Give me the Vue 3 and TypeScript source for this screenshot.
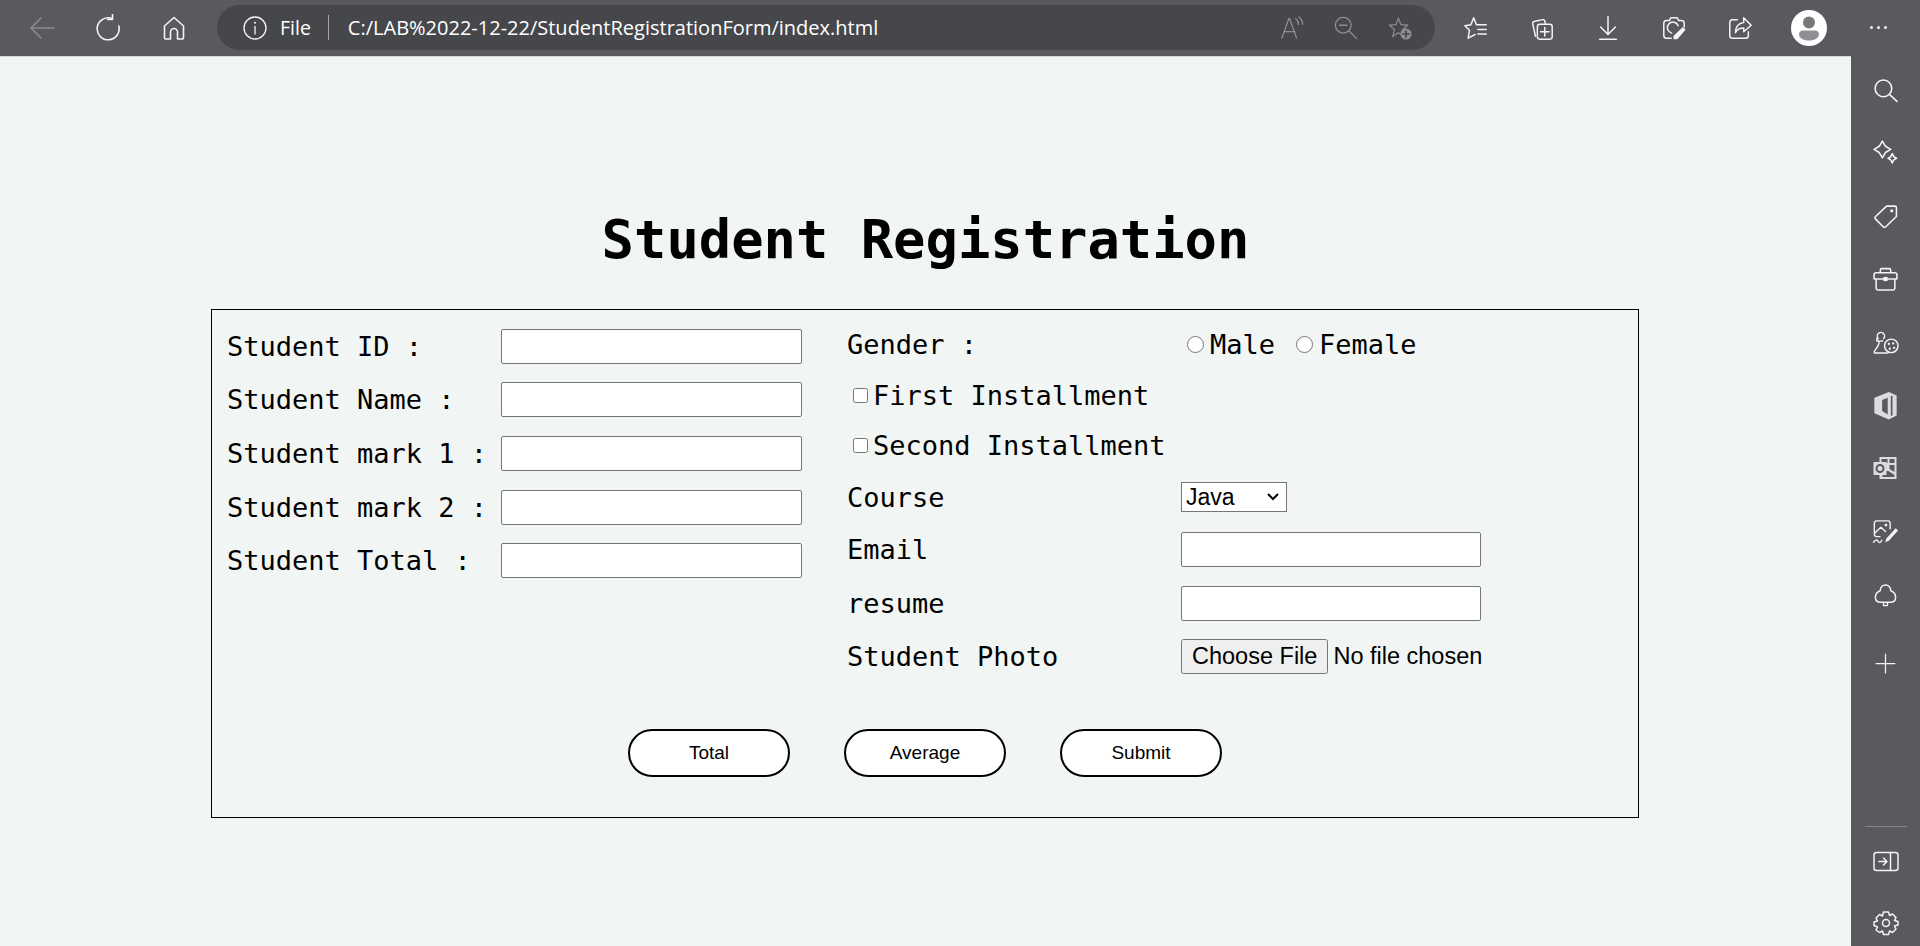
<script setup lang="ts">
import {ref} from "vue";

const leftLabels = ["Student ID :", "Student Name :", "Student mark 1 :", "Student mark 2 :", "Student Total :"];
const course = ref("Java");
</script>

<template>
  <div class="Browser">
    <header class="Toolbar">
      <svg class="Icon nav back" viewBox="0 0 28 28"><path d="M26 14H3M13 4 3 14l10 10"/></svg>
      <svg class="Icon nav" viewBox="0 0 28 28"><path d="M18 4.500A11 11 0 1 0 24.800 12M18.500 0.500V5.500H13.500"/></svg>
      <svg class="Icon nav" viewBox="0 0 28 28"><path d="M14 3.500 4.500 12v11.500a1.500 1.500 0 0 0 1.500 1.500h4.500v-7a3.500 3.500 0 0 1 7 0v7H22a1.500 1.500 0 0 0 1.500-1.500V12z"/></svg>

      <div class="AddressBar">
        <svg class="Icon info" viewBox="0 0 24 24"><circle cx="12" cy="12" r="11"/><path d="M12 10.500V18"/><circle class="Solid" cx="12" cy="6.800" r="1"/></svg>
        <span class="FileLabel">File</span>
        <span class="Separator"></span>
        <span class="Url">C:/LAB%2022-12-22/StudentRegistrationForm/index.html</span>
        <div class="AddressIcons">
          <svg class="Icon dim" viewBox="0 0 26 26"><path d="M2 24 9.500 3h1L18 24M5 17h11M17 3c2 1.500 3 3.500 3 6M20.500 1c2.500 2 4 4.500 4 8"/></svg>
          <svg class="Icon dim" viewBox="0 0 26 26"><circle cx="10" cy="10" r="8.500"/><path d="M16 16l8.500 8.500M6 10h8"/></svg>
          <svg class="Icon dim" viewBox="0 0 28 28"><path d="M12 2.500l3 7.500 8 .6-6 5.400 1.800 7.500L12 19.500 5.500 24l2-8-6-5.400 8-.6z"/><circle class="Badge" cx="21" cy="21" r="6.500"/><path class="BadgePlus" d="M21 17.500v7M17.500 21h7"/></svg>
        </div>
      </div>

      <div class="ToolIcons">
        <svg class="Icon tool" viewBox="0 0 28 28"><path d="M14.500 10.500 11.500 3l-3 7.500-6.500 1 5 5-1.500 8.500 7.500-4M14.500 10.500H25M16 15.500h9M16 20.500h9"/></svg>
        <svg class="Icon tool" viewBox="0 0 28 28"><path d="M7 23 4 9.500a2 2 0 0 1 1.500-2.500l9-2a2 2 0 0 1 2.500 1.500l.6 2.500"/><rect x="9" y="10" width="16" height="16" rx="2.500"/><path d="M17 13.500v9M12.500 18h9"/></svg>
        <svg class="Icon tool" viewBox="0 0 28 28"><path d="M14 2v19M6 13l8 8 8-8M5 26h18"/></svg>
        <svg class="Icon tool" viewBox="0 0 28 28"><path d="M9 6l1.500-3h7L19 6h3a3 3 0 0 1 3 3v4M11 25H6a3 3 0 0 1-3-3V9a3 3 0 0 1 3-3h3"/><path d="M18.500 11.500a6 6 0 1 0-7 8"/><path class="FillWhite" d="M23.500 13l3 3-9 10h-4v-3.500z"/></svg>
        <svg class="Icon tool" viewBox="0 0 28 28"><path d="M11 5H6a3 3 0 0 0-3 3v14a3 3 0 0 0 3 3h14a3 3 0 0 0 3-3v-4"/><path d="M18 3l8 8-8 7v-4c-4 0-7 1-9 5 0-6 3-10 9-11z"/></svg>
        <div class="Avatar">
          <svg viewBox="0 0 36 36"><circle cx="18" cy="12.500" r="6" fill="#77787c"/><path d="M8 24a4 4 0 0 1 4-3.500h12a4 4 0 0 1 4 3.500c0 4-4 6.500-10 6.500S8 28 8 24z" fill="#8f9094"/></svg>
        </div>
        <div class="More"><i></i><i></i><i></i></div>
      </div>
    </header>

    <div class="Body">
      <main class="Page">
        <h1 class="Title">Student Registration</h1>
        <form class="FormBox" @submit.prevent>
          <div class="Columns">
            <div class="LeftColumn">
              <label v-for="label in leftLabels" :key="label" class="LeftRow">
                <span>{{ label }}</span>
                <input class="TextField" type="text"/>
              </label>
            </div>
            <div class="RightColumn">
              <div class="RightRow gender">
                <span>Gender :</span>
                <div class="Choices">
                  <label class="Choice"><input type="radio" name="gender"/>Male</label>
                  <label class="Choice"><input type="radio" name="gender"/>Female</label>
                </div>
              </div>
              <label class="CheckRow first"><input type="checkbox"/>First Installment</label>
              <label class="CheckRow second"><input type="checkbox"/>Second Installment</label>
              <div class="RightRow course">
                <span>Course</span>
                <select v-model="course" class="CourseSelect">
                  <option>Java</option>
                  <option>Python</option>
                </select>
              </div>
              <div class="RightRow">
                <span>Email</span>
                <input class="TextField" type="text"/>
              </div>
              <div class="RightRow">
                <span>resume</span>
                <input class="TextField" type="text"/>
              </div>
              <div class="RightRow">
                <span>Student Photo</span>
                <input class="FileField" type="file"/>
              </div>
            </div>
          </div>
          <div class="Actions">
            <button type="button" class="PillButton">Total</button>
            <button type="button" class="PillButton">Average</button>
            <button type="submit" class="PillButton">Submit</button>
          </div>
        </form>
      </main>

      <aside class="Sidebar">
        <div class="SideTop">
          <svg class="Icon side" viewBox="0 0 24 24"><circle cx="10" cy="10" r="8"/><path d="M16 16l7 6.500"/></svg>
          <svg class="Icon side sparkle" viewBox="0 0 24 24"><path d="M9 2l3 5 5 3-5 3-3 5-3-5-5-3 5-3zM18.500 14l1.500 3 2.500 1.500-2.500 1.500-1.500 3-1.500-3-2.500-1.500 2.500-1.500z"/></svg>
          <svg class="Icon side" viewBox="0 0 24 24"><path d="M2.500 13 13 3h8a1.500 1.500 0 0 1 1.500 1.500V13L12 23a1.500 1.500 0 0 1-2 0l-7.500-7.500a1.800 1.800 0 0 1 0-2.500z"/><circle class="Solid" cx="18" cy="7.500" r="1.500"/></svg>
          <svg class="Icon side wide" viewBox="0 0 26 24"><path d="M8 6V3.500A1.500 1.500 0 0 1 9.500 2h7A1.500 1.500 0 0 1 18 3.500V6M2 8a2 2 0 0 1 2-2h18a2 2 0 0 1 2 2v4H2zM4 12v9a1.500 1.500 0 0 0 1.500 1.500h15A1.500 1.500 0 0 0 22 21v-9"/><rect class="Solid" x="11" y="10" width="4" height="4"/></svg>
          <svg class="Icon side wide" viewBox="0 0 28 26"><path d="M12 9.500a3.800 3.800 0 1 0-5.500 0H5v2.500h2.500c0 3-1 5.500-4 9l-1 1.500v2h14M9 12h2"/><circle cx="20" cy="17" r="7"/><circle class="Solid" cx="17.500" cy="15" r="1.200"/><circle class="Solid" cx="22" cy="14.500" r="1.200"/><circle class="Solid" cx="23" cy="19" r="1.200"/><circle class="Solid" cx="18.500" cy="20" r="1.200"/></svg>
          <svg class="Icon side office" viewBox="0 0 24 26"><path class="FillPale" d="M2 6 15 1l7 3v18l-7 3.500L2 20zM14 6 9 8v10l5 3z"/><path class="NoFillDark" d="M17.500 5v16.500"/></svg>
          <svg class="Icon side wide" viewBox="0 0 26 26"><path class="FillPale" d="M7 2h17v22H7zM9 4v4h6V4zM17 4v4h5V4zM10 16v6h12v-2l-6-4zM17 10v4l5 3v-7z"/><rect class="FillPale" x="1" y="7" width="13" height="13"/><circle class="DarkRing" cx="7.500" cy="13.500" r="3.500"/></svg>
          <svg class="Icon side wide" viewBox="0 0 28 28"><path d="M8 19H4.500A2.500 2.500 0 0 1 2 16.500V4.500A2.500 2.500 0 0 1 4.500 2h12A2.500 2.500 0 0 1 19 4.500v6"/><path d="M2.500 15 9 9l5 4.500"/><circle class="Solid" cx="14.500" cy="6.500" r="1.500"/><path class="FillWhite" d="M25 10l2.500 2.500-10 11-4 1.500 1.500-4z"/><path d="M1 25c3-3 4-3 5-1s2 2 4-1"/></svg>
          <svg class="Icon side tree" viewBox="0 0 24 26"><path d="M12 2c-3 0-5.500 2.500-5.500 6-3 1-5 4-5 7 0 3.500 2.500 5 5.500 5h10c3 0 5.500-1.500 5.500-5 0-3-2-6-5-7 0-3.500-2.500-6-5.500-6zM10 20v3.500h4V20"/></svg>
          <svg class="Icon side plus" viewBox="0 0 24 24"><path d="M12 3v18M3 12h18"/></svg>
        </div>
        <div class="SideBottom">
          <span class="SideDivider"></span>
          <svg class="Icon side panel" viewBox="0 0 26 20"><rect x="1" y="1" width="24" height="18" rx="2.500"/><path d="M17.500 1v18M6 10h8M10.500 6.500 14 10l-3.500 3.500"/></svg>
          <svg class="Icon side gear" viewBox="0 0 26 26"><circle cx="13" cy="13" r="3.500"/><path d="M10.500 2h5l1 3.500 3-1.500 3.500 3.500-1.500 3 3.500 1v3.500l-3.500 1 1.500 3-3.500 3.500-3-1.500-1 3.500h-5l-1-3.500-3 1.500L3 20l1.500-3L1 15.500V12l3.500-1L3 8l3.500-3.500 3 1.500z"/></svg>
        </div>
      </aside>
    </div>
  </div>
</template>

<style>
html, body {
  margin: 0;
  height: 100%;
  overflow: hidden;
}
</style>

<style scoped>
.Browser {
  width: 1920px;
  height: 946px;
  display: flex;
  flex-direction: column;
  background: #595a5f;
  color: #000;
}

.Icon {
  fill: none;
  stroke: #f4f4f5;
  stroke-width: 1.6;
  stroke-linecap: round;
  stroke-linejoin: round;
  flex: none;
}

.Solid {
  fill: #f4f4f5;
  stroke: none;
}

.FillWhite {
  fill: #f4f4f5;
  stroke: none;
}

.FillPale {
  fill: #dcdcde;
  stroke: none;
  fill-rule: evenodd;
}

.NoFillDark {
  stroke: #595a5f;
}

.DarkRing {
  fill: #dcdcde;
  stroke: #595a5f;
  stroke-width: 2;
}

/* region: toolbar */
.Toolbar {
  height: 56px;
  flex: none;
  display: flex;
  align-items: center;
  box-sizing: border-box;
  padding-left: 28px;
  padding-bottom: 1px;
  background: #595a5f;
  font-family: "Open Sans", "Noto Sans", sans-serif;
  color: #fff;
}

.nav {
  width: 28px;
  height: 28px;
  margin-right: 38px;
}

.back {
  stroke: #8b8c90;
}

.AddressBar {
  width: 1218px;
  height: 45px;
  margin-left: -9px;
  border-radius: 23px;
  background: #46474b;
  display: flex;
  align-items: center;
  box-sizing: border-box;
  padding-left: 26px;
  flex: none;
}

.info {
  width: 24px;
  height: 24px;
  stroke-width: 1.3;
}

.FileLabel {
  margin-left: 13px;
  font-size: 19.500px;
}

.Separator {
  width: 1px;
  height: 25px;
  margin: 0 19px 0 17px;
  background: #a5a6a9;
}

.Url {
  font-size: 20px;
  white-space: nowrap;
}

.AddressIcons {
  margin-left: auto;
  margin-right: 23px;
  display: flex;
  align-items: center;
  gap: 30px;
}

.dim {
  width: 24px;
  height: 24px;
  stroke: #8e8f93;
  stroke-width: 1.4;
}

.Badge {
  fill: #8e8f93;
  stroke: none;
}

.BadgePlus {
  stroke: #46474b;
  stroke-width: 2;
}

.ToolIcons {
  flex: 1;
  display: flex;
  align-items: center;
  padding-left: 28px;
}

.tool {
  width: 26px;
  height: 26px;
  margin-right: 40px;
}

.Avatar {
  width: 36px;
  height: 36px;
  border-radius: 50%;
  background: #fff;
  margin-left: -2px;
  overflow: hidden;
}

.Avatar svg {
  display: block;
}

.More {
  margin-left: 43px;
  display: flex;
  gap: 4px;
}

.More i {
  width: 3px;
  height: 3px;
  border-radius: 50%;
  background: #f4f4f5;
}
/* endregion */

.Body {
  flex: 1;
  min-height: 0;
  display: flex;
}

/* region: page */
.Page {
  width: 1851px;
  box-sizing: border-box;
  border-top: 1px solid #d5d8d7;
  background: #f1f5f4;
  padding: 151px 0 0 211px;
  font-family: "DejaVu Sans Mono", "Liberation Mono", monospace;
  font-size: 27px;
}

.Title {
  width: 1429px;
  margin: 0 0 37px;
  text-align: center;
  font-size: 53.800px;
  line-height: 64px;
  font-weight: 700;
}

.FormBox {
  width: 1428px;
  height: 509px;
  box-sizing: border-box;
  border: 1px solid #000;
  padding: 0 0 0 15px;
}

.Columns {
  display: flex;
  height: 405px;
}

.LeftColumn {
  width: 620px;
  flex: none;
  padding-top: 9.500px;
  box-sizing: border-box;
}

.LeftRow {
  display: grid;
  grid-template-columns: 274px 1fr;
  align-items: center;
  height: 53.600px;
  white-space: pre;
}

.TextField {
  box-sizing: border-box;
  width: 301px;
  height: 35px;
  padding: 1px 2px;
  border: 1px solid #767676;
  border-radius: 2px;
  background: #fff;
}

.RightColumn {
  flex: 1;
  padding-top: 8px;
}

.RightColumn .TextField {
  width: 300px;
}

.RightRow {
  display: grid;
  grid-template-columns: 334px 1fr;
  align-items: center;
  height: 53.600px;
  white-space: pre;
}

.RightRow.gender {
  height: 52px;
}

.RightRow.course {
  height: 52px;
}

.Choices {
  display: flex;
  margin-left: 5px;
  gap: 20px;
}

.Choice {
  display: flex;
  align-items: center;
}

.Choice input {
  width: 17px;
  height: 17px;
  margin: 0 6px 0 1px;
}

.CheckRow {
  display: flex;
  align-items: center;
  height: 50.500px;
  padding-left: 5px;
}

.CheckRow input {
  width: 15px;
  height: 15px;
  margin: 0 5px 0 1px;
}

.CourseSelect {
  width: 106px;
  height: 30px;
  appearance: none;
  font-family: "Liberation Sans", Arial, sans-serif;
  font-size: 23px;
  background: #fff url("data:image/svg+xml,%3Csvg xmlns='http://www.w3.org/2000/svg' width='14' height='8'%3E%3Cpath d='M2 1l5 5 5-5' fill='none' stroke='%23000' stroke-width='2'/%3E%3C/svg%3E") no-repeat 84px 10px;
  border: 1px solid #767676;
  border-radius: 0;
  padding: 0 0 0 4px;
  color: #000;
}

.FileField {
  width: 304px;
  font-family: "Liberation Sans", Arial, sans-serif;
  font-size: 23.500px;
}

.FileField::file-selector-button {
  padding: 2px 9px;
  margin-right: 5px;
}

.Actions {
  display: flex;
  gap: 54px;
  padding-left: 401px;
  padding-top: 14px;
}

.PillButton {
  width: 162px;
  height: 48px;
  border: 2px solid #000;
  border-radius: 24px;
  background: #fff;
  color: #000;
  font-family: "Liberation Sans", Arial, sans-serif;
  font-size: 19px;
  padding: 0;
}
/* endregion */

/* region: sidebar */
.Sidebar {
  flex: 1;
  display: flex;
  flex-direction: column;
  justify-content: space-between;
  align-items: center;
  padding: 22px 0 10px;
  background: #595a5f;
}

.SideTop, .SideBottom {
  display: flex;
  flex-direction: column;
  align-items: center;
}

.SideTop {
  gap: 37.500px;
}

.side {
  width: 25px;
  height: 25px;
  stroke-width: 1.5;
}

.sparkle {
  margin-top: -2px;
  margin-bottom: 2px;
}

.wide {
  width: 27px;
  height: 26px;
}

.office {
  width: 27px;
  height: 29px;
  margin: -2px 0;
}

.tree {
  margin-top: 1px;
}

.plus {
  margin-top: 5px;
  stroke-width: 1.2;
}

.SideDivider {
  width: 42px;
  height: 1px;
  background: #85868a;
  margin-bottom: 22px;
}

.panel {
  width: 26px;
  margin-bottom: 36px;
}

.gear {
  width: 26px;
  height: 26px;
}
/* endregion */
</style>
